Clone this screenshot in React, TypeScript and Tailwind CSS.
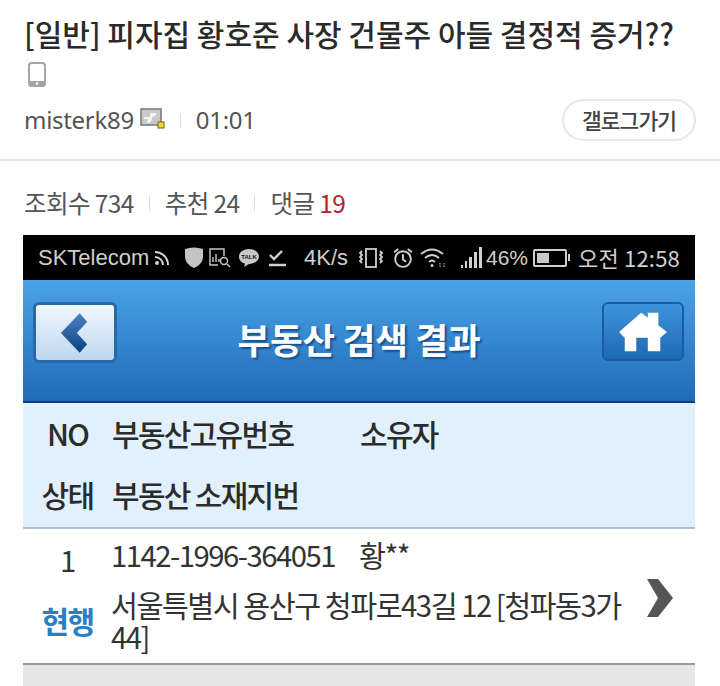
const kr = "font-['Noto_Sans_CJK_KR','Noto_Sans',sans-serif]";
const arial = "font-['Liberation_Sans',sans-serif]";

function PhoneIcon() {
  return (
    <svg width="18" height="25" viewBox="0 0 18 25">
      <rect x="1" y="1" width="16" height="23" rx="2.500" fill="#fff" stroke="#a3a5aa" strokeWidth="2" />
      <path d="M1 19h16v2.500a2.500 2.500 0 0 1-2.500 2.500h-11A2.500 2.500 0 0 1 1 21.500z" fill="#a3a5aa" />
      <circle cx="9" cy="21.500" r="1.200" fill="#fff" />
    </svg>
  );
}

function LevelIcon() {
  return (
    <svg width="25" height="22" viewBox="0 0 25 22">
      <rect x="1" y="1" width="20" height="16" fill="#c9c9c9" stroke="#777" strokeWidth="1.500" />
      <path d="M4 9h6V5h7l-2 3-3 1v3l-3 3H7l1-4H4z" fill="#f4f4f4" />
      <rect x="18" y="14" width="6" height="6" fill="#f6d92c" stroke="#6b5d10" />
    </svg>
  );
}

function Sep() {
  return <span className="w-px h-[15px] bg-[#dcdcdc]" />;
}

function StatusBar() {
  return (
    <div className="h-[45px] bg-black flex items-center pl-[15px] text-[22px] text-[#cfcfcf] whitespace-nowrap">
      <span className={`w-[116px] ${arial}`}>SKTelecom</span>
      {/* rss */}
      <svg width="18" height="16" viewBox="0 0 18 16" fill="none" stroke="#d0d0d0" strokeWidth="2">
        <circle cx="3" cy="13" r="2" fill="#d0d0d0" stroke="none" />
        <path d="M1 7a8 8 0 0 1 8 8M1 2a13 13 0 0 1 13 13" />
      </svg>
      {/* shield */}
      <svg width="18" height="21" viewBox="0 0 18 21" className="ml-[13px]">
        <path d="M0 2q9-3 18 0v8q0 7-9 11Q0 17 0 10z" fill="#c4c4c4" />
      </svg>
      {/* report */}
      <svg width="23" height="20" viewBox="0 0 23 20" className="ml-[6px]" fill="none" stroke="#c8c8c8" strokeWidth="1.400">
        <path d="M9 17H1V1h14v7" />
        <path d="M4 14V9M7 14V6M10 14v-3" />
        <circle cx="15" cy="13" r="3.500" />
        <path d="M18 16l3 3" />
      </svg>
      {/* talk */}
      <svg width="22" height="20" viewBox="0 0 22 20" className="ml-[6px]">
        <path d="M11 1c5.500 0 10 3.300 10 7.500S16.500 16 11 16l-5 3 1-3.500C3.500 15 1 12 1 8.500 1 4.300 5.500 1 11 1z" fill="#c8c8c8" />
        <text x="11" y="11" textAnchor="middle" fontSize="6" fontWeight="700" fill="#111" fontFamily="Liberation Sans">TALK</text>
      </svg>
      {/* download check */}
      <svg width="18" height="18" viewBox="0 0 18 18" className="ml-[8px]" fill="none" stroke="#d0d0d0" strokeWidth="2.400">
        <path d="M2 6l4 4 8-8M1 16h17" />
      </svg>
      <span className={`ml-[18px] w-[54px] ${arial}`}>4K/s</span>
      {/* vibrate */}
      <svg width="26" height="20" viewBox="0 0 26 20" fill="none" stroke="#d0d0d0" strokeWidth="1.800">
        <rect x="8" y="1" width="10" height="18" />
        <path d="M4 3L2 5l2 2-2 2 2 2-2 2 2 2M22 3l2 2-2 2 2 2-2 2 2 2-2 2" />
      </svg>
      {/* alarm */}
      <svg width="22" height="22" viewBox="0 0 21 21" className="ml-[8px]" fill="none" stroke="#d0d0d0" strokeWidth="1.800">
        <circle cx="10.500" cy="11.500" r="7.500" />
        <path d="M10.500 7v5l3 2M2 5l4-3M19 5l-4-3" />
      </svg>
      {/* wifi */}
      <svg width="26" height="20" viewBox="0 0 26 20" className="ml-[6px]" fill="none" stroke="#d0d0d0" strokeWidth="1.800">
        <path d="M1 6q11-9 22 0M5 10q7-6 14 0M9 14q3-3 6 0" />
        <circle cx="12" cy="17.500" r="1.500" fill="#d0d0d0" stroke="none" />
        <path d="M20 15v4M24 15v4" strokeWidth="1" strokeDasharray="1.500 1" />
      </svg>
      {/* signal */}
      <div className="ml-[15px] flex items-end gap-[2px] h-[20px]">
        <span className="w-[2px] h-[3px] bg-[#d0d0d0]" />
        <span className="w-[2px] h-[7px] bg-[#d0d0d0]" />
        <span className="w-[3px] h-[11px] bg-[#d0d0d0]" />
        <span className="w-[3px] h-[16px] bg-[#d0d0d0]" />
        <span className="w-[3px] h-[21px] bg-[#d0d0d0]" />
      </div>
      <span className={`ml-[4px] w-[47px] text-[21px] ${arial}`}>46%</span>
      {/* battery */}
      <div className="flex items-center">
        <div className="w-[34px] h-[18px] border-2 border-[#d0d0d0] rounded-[2px] p-[2px]">
          <div className="w-[46%] h-full bg-[#c8c8c8]" />
        </div>
        <span className="w-[2px] h-[7px] ml-[1px] bg-[#d0d0d0]" />
      </div>
      <span className="ml-[8px] text-[22px] tracking-[0.2px]">오전 12:58</span>
    </div>
  );
}

export default function App() {
  return (
    <div className={`w-[720px] h-[686px] overflow-hidden bg-white text-[#333] ${kr}`}>
      <div className="h-[161px] border-b-2 border-[#e4e4ea] pl-6 pr-6 pt-[11px]">
        <h1 className="text-[30px] leading-[44px] font-medium text-[#2a2a2a] tracking-[0px] whitespace-nowrap">
          [일반] 피자집 황호준 사장 건물주 아들 결정적 증거??
        </h1>
        <div className="h-[32px] flex items-center pl-[4px] pt-[6px]">
          <PhoneIcon />
        </div>
        <div className="flex items-center justify-between mt-[12px]">
          <div className="flex items-center text-[24px] text-[#555] tracking-[-0.3px] font-['Noto_Sans',sans-serif]">
            <span>misterk89</span>
            <span className="ml-[6px] -mt-[2px]"><LevelIcon /></span>
            <span className="ml-[15px] mr-[15px] flex"><Sep /></span>
            <span>01:01</span>
          </div>
          <button className="w-[134px] h-[42px] rounded-[21px] border-2 border-[#e6e6ec] text-[21.500px] font-medium text-[#444] tracking-[-1px] bg-white">
            갤로그가기
          </button>
        </div>
      </div>

      <div className="h-[74px] pl-6 pt-[24px] flex items-start">
        <div className="flex items-center h-[36px] text-[24.500px] text-[#555] tracking-[-0.6px]">
          <span>조회수 734</span>
          <span className="mx-[15px] flex"><Sep /></span>
          <span>추천 24</span>
          <span className="mx-[15px] flex"><Sep /></span>
          <span>댓글 <span className="text-[#b5202a]">19</span></span>
        </div>
      </div>

      <div className="ml-[23px] w-[672px]">
        <StatusBar />

        {/* blue title bar */}
        <div className="h-[123px] border-b-2 border-[#0d3f74] bg-gradient-to-b from-[#4ba3e6] to-[#1f6cb8] relative flex items-start justify-between pl-[10px] pr-[11px] pt-[22px]">
          <button className="w-[84px] h-[61px] rounded-[6px] border-[3px] border-[#2a68a8] bg-gradient-to-b from-[#f2f8fd] to-[#bcd7f0] flex items-center justify-center">
            <svg width="30" height="40" viewBox="0 0 32 42">
              <defs>
                <linearGradient id="bk" x1="0" y1="0" x2="0" y2="1">
                  <stop offset="0" stopColor="#4c83c0" />
                  <stop offset="1" stopColor="#0d3f83" />
                </linearGradient>
              </defs>
              <path d="M21 0l8 9-11 12 11 12-8 9L1 21z" fill="url(#bk)" />
            </svg>
          </button>
          <span className="absolute left-0 right-0 top-[35px] text-center text-[35.500px] leading-[48px] font-bold text-white tracking-[-0.2px] [text-shadow:2px_2px_2px_#174f8c]">
            부동산 검색 결과
          </span>
          <button className="w-[82px] h-[59px] rounded-[6px] border-2 border-[#1a5c9f] bg-gradient-to-b from-[#3d94dc] to-[#1f69b4] flex items-center justify-center">
            <svg width="48" height="40" viewBox="0 0 50 40">
              <path d="M23 0l7 5V0h11v13l9 7-7 6v14H30V26H18v14H6V26l-6-6z" fill="#fff" />
            </svg>
          </button>
        </div>

        {/* table head */}
        <div className="h-[126px] bg-[#e2f0fc] border-b-2 border-[#a9c0d6] text-[30px] font-medium text-[#2b2b2b] tracking-[-1.700px]">
          <div className="flex h-[60px] items-center">
            <span className="w-[89px] text-center">NO</span>
            <span className="w-[248px]">부동산고유번호</span>
            <span>소유자</span>
          </div>
          <div className="flex h-[62px] items-center">
            <span className="w-[89px] text-center">상태</span>
            <span>부동산 소재지번</span>
          </div>
        </div>

        {/* result row */}
        <div className="h-[136px] border-b-2 border-[#999] flex text-[29.300px] text-[#333] tracking-[-1.500px]">
          <div className="w-[89px] flex flex-col items-center">
            <span className="mt-[10px] leading-[40px]">1</span>
            <span className="mt-[21px] leading-[40px] font-bold text-[#2a7fc4] text-[30px]">현행</span>
          </div>
          <div className="w-[520px] -ml-px">
            <div className="flex h-[51px] items-center">
              <span className="w-[248px]">1142-1996-364051</span>
              <span>황**</span>
            </div>
            <div className="leading-[32px] mt-[8px]">서울특별시 용산구 청파로43길 12 [청파동3가 44]</div>
          </div>
          <div className="pl-[15px] pt-[50px]">
            <svg width="28" height="38" viewBox="0 0 28 38">
              <path d="M1 0h11l15 19-15 19H1l11-19z" fill="#555" />
            </svg>
          </div>
        </div>
        <div className="h-[30px] bg-[#e6e6e6]" />
      </div>
    </div>
  );
}
